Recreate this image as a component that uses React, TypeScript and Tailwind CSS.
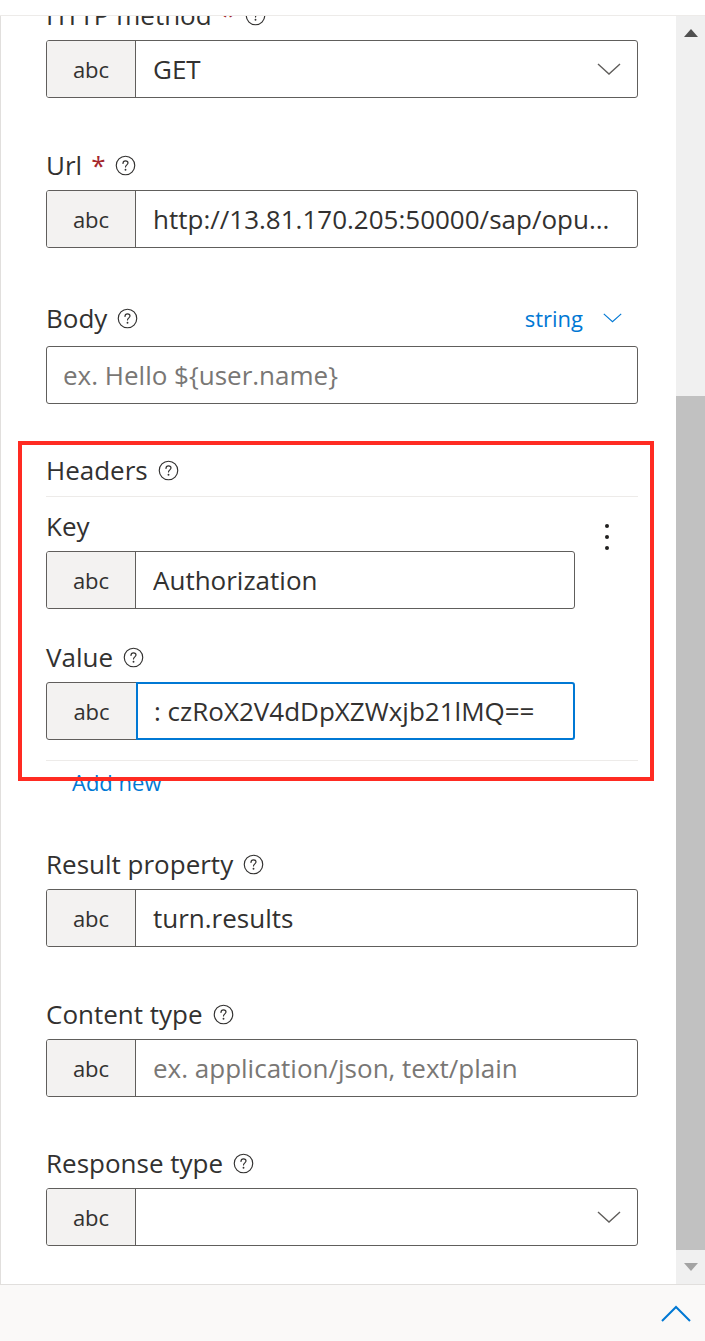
import React from 'react';

const font = { fontFamily: '"Open Sans", "Liberation Sans", sans-serif' };

function HelpIcon() {
  return (
    <svg width="21" height="21" viewBox="0 0 20 20" className="shrink-0">
      <circle cx="10" cy="10" r="8.8" fill="none" stroke="#323130" strokeWidth="1.1" />
      <path d="M7.6 8 C7.6 6.5 8.7 5.6 10 5.6 C11.4 5.6 12.4 6.5 12.4 7.7 C12.4 9.3 10 9.5 10 11.4" fill="none" stroke="#323130" strokeWidth="1.1" strokeLinecap="round" />
      <circle cx="10" cy="14" r="0.9" fill="#323130" />
    </svg>
  );
}

function Chevron({ color = '#605e5c', w = 24 }: { color?: string; w?: number }) {
  return (
    <svg width={w} height={w / 2} viewBox="0 0 24 12">
      <path d="M1 1 L12 11 L23 1" fill="none" stroke={color} strokeWidth="1.4" />
    </svg>
  );
}

function Label({ text, required, className = '' }: { text: string; required?: boolean; className?: string }) {
  return (
    <div className={`h-[40px] flex items-center gap-[10px] text-[26px] text-[#323130] ${className}`}>
      <span>
        {text}
        {required && <span className="text-[#a4262c] ml-[9px]">*</span>}
      </span>
      <HelpIcon />
    </div>
  );
}

function TextBox({
  value,
  placeholder,
  dropdown,
  prefix = true,
  width = 'w-[592px]',
}: {
  value?: string;
  placeholder?: string;
  dropdown?: boolean;
  prefix?: boolean;
  width?: string;
}) {
  return (
    <div className={`${width} h-[58px] flex border border-[#605e5c] rounded-[3px] overflow-hidden bg-white`}>
      {prefix && (
        <div className="w-[89px] shrink-0 bg-[#f3f2f1] border-r border-[#605e5c] flex items-center justify-center text-[22px] text-[#323130]">
          abc
        </div>
      )}
      <div className={`flex-1 flex items-center ${prefix ? 'pl-[17px]' : 'pl-[16px]'} pr-[16px] text-[26px] min-w-0`}>
        <span className={`flex-1 whitespace-nowrap overflow-hidden ${value ? 'text-[#323130]' : 'text-[#797775]'}`}>
          {value || placeholder}
        </span>
        {dropdown && <Chevron />}
      </div>
    </div>
  );
}

export default function App() {
  return (
    <div className="relative w-[705px] h-[1341px] bg-white flex flex-col overflow-hidden" style={font}>
      <div className="h-[16px] shrink-0 bg-white border-b border-[#edebe9]" />

      <div className="flex-1 flex min-h-0 border-l border-[#c8c6c4] border-b border-[#e1dfdd]">
        {/* form content */}
        <div className="flex-1 overflow-hidden pl-[45px]">
          <div className="mt-[-21px] flex flex-col">
            <Label text="HTTP method" required />
            <div className="mt-[5px]">
              <TextBox value="GET" dropdown />
            </div>

            <Label text="Url" required className="mt-[47px]" />
            <div className="mt-[5px]">
              <TextBox value="http://13.81.170.205:50000/sap/opu..." />
            </div>

            <div className="mt-[50px] w-[592px] h-[40px] flex items-center justify-between pr-[16px]">
              <div className="flex items-center gap-[10px] text-[26px] text-[#323130]">
                <span>Body</span>
                <HelpIcon />
              </div>
              <div className="flex items-center gap-[20px] text-[22px] text-[#0078d4]">
                <span>string</span>
                <Chevron color="#0078d4" w={19} />
              </div>
            </div>
            <div className="mt-[8px]">
              <TextBox prefix={false} placeholder="ex. Hello ${user.name}" />
            </div>

            {/* headers */}
            <Label text="Headers" className="mt-[46px]" />
            <div className="mt-[6px] w-[592px] h-px bg-[#edebe9]" />
            <div className="flex w-[592px]">
              <div className="flex flex-col">
                <div className="mt-[9px] h-[40px] flex items-center text-[26px] text-[#323130]">Key</div>
                <div className="mt-[5px]">
                  <TextBox value="Authorization" width="w-[529px]" />
                </div>
                <Label text="Value" className="mt-[28px]" />
                <div className="mt-[5px] w-[529px] h-[58px] flex">
                  <div className="w-[91px] shrink-0 bg-[#f3f2f1] border border-[#605e5c] rounded-l-[3px] flex items-center justify-center text-[22px] text-[#323130]">
                    abc
                  </div>
                  <div className="flex-1 -ml-px border-2 border-[#0078d4] rounded-r-[3px] flex items-center pl-[16px] text-[26px] text-[#323130] whitespace-nowrap overflow-hidden">
                    : czRoX2V4dDpXZWxjb21lMQ==
                  </div>
                </div>
              </div>
              <div className="flex-1 flex justify-center pt-[27px]">
                <div className="flex flex-col items-center gap-[7px] h-fit">
                  <span className="w-[4px] h-[4px] rounded-full bg-[#201f1e]" />
                  <span className="w-[4px] h-[4px] rounded-full bg-[#201f1e]" />
                  <span className="w-[4px] h-[4px] rounded-full bg-[#201f1e]" />
                </div>
              </div>
            </div>
            <div className="mt-[20px] w-[592px] h-px bg-[#edebe9]" />
            <div className="mt-[1px] h-[40px] pl-[26px] flex items-center text-[22px] text-[#0078d4]">Add new</div>

            <Label text="Result property" className="mt-[42px]" />
            <div className="mt-[5px]">
              <TextBox value="turn.results" />
            </div>

            <Label text="Content type" className="mt-[47px]" />
            <div className="mt-[5px]">
              <TextBox placeholder="ex. application/json, text/plain" />
            </div>

            <Label text="Response type" className="mt-[46px]" />
            <div className="mt-[5px]">
              <TextBox dropdown />
            </div>
          </div>
        </div>

        {/* scrollbar */}
        <div className="w-[29px] shrink-0 bg-[#f0f0f0] flex flex-col">
          <div className="h-[34px] flex items-center justify-center">
            <svg width="14" height="8" viewBox="0 0 14 8">
              <path d="M0 8 L7 0 L14 8 Z" fill="#505050" />
            </svg>
          </div>
          <div className="flex-1 flex flex-col">
            <div className="mt-[346px] flex-1 bg-[#c1c1c1]" />
          </div>
          <div className="h-[34px] flex items-center justify-center">
            <svg width="14" height="8" viewBox="0 0 14 8">
              <path d="M0 0 L7 8 L14 0 Z" fill="#a3a3a3" />
            </svg>
          </div>
        </div>
      </div>

      <div className="h-[56px] shrink-0 bg-[#faf9f8] flex items-center justify-end pr-[14px]">
        <svg width="30" height="17" viewBox="0 0 30 17">
          <path d="M1 16 L15 2 L29 16" fill="none" stroke="#0078d4" strokeWidth="2" />
        </svg>
      </div>

      {/* annotation box */}
      <div className="absolute left-[18px] top-[441px] w-[636px] h-[340px] border-[4px] border-[#ff2b22] pointer-events-none" />
    </div>
  );
}
